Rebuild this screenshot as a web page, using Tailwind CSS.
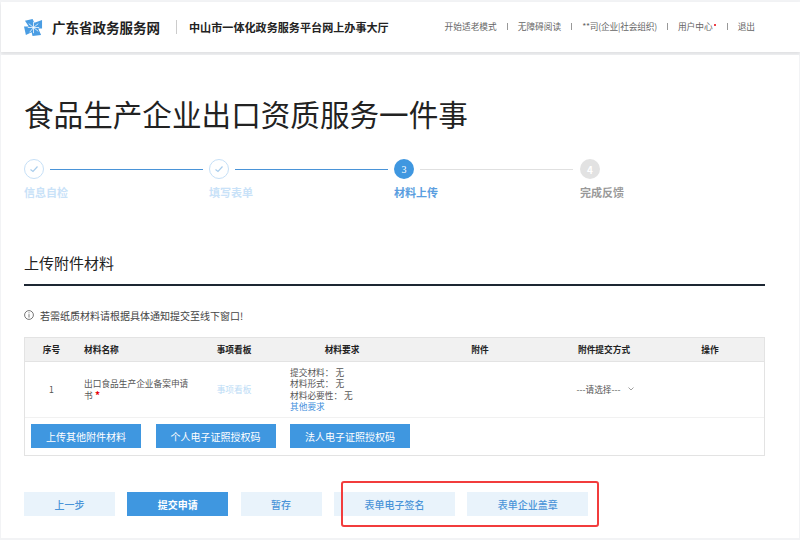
<!DOCTYPE html>
<html lang="zh-CN">

<head>
  <meta charset="UTF-8">
  <title>食品生产企业出口资质服务一件事</title>
  <script src="https://cdn.jsdelivr.net/npm/@tailwindcss/browser@4"></script>
</head>

<body class="relative w-[800px] h-[540px] overflow-hidden bg-[#f2f3f5] pt-[2px] font-['Noto_Sans_CJK_SC','Liberation_Sans',sans-serif] text-[#333]">
  <!-- top bar -->
  <header class="h-[50px] ml-[1px] bg-white flex items-center pl-[23px] pr-[45px] shadow-[0_2px_3px_rgba(0,0,0,0.08)]">
    <svg class="w-[19px] h-[19px] mr-[9px]" viewBox="0 0 20 20">
      <path d="M1 3 L9 1 L11 5 L19 2 L19 11 L15 11 L18 18 L9 19 L8 15 L2 18 L0 9 L5 9 Z" fill="#4a9de3" />
      <path d="M10 10 L5 6 M10 10 L15 6 M10 10 L6 15 M10 10 L15 14 M10 10 L10 4 M10 10 L16 10 M10 10 L4 10 M10 10 L10 16" stroke="#fff" stroke-width="0.8" />
    </svg>
    <span class="text-[13.5px] font-bold text-[#222]">广东省政务服务网</span>
    <span class="w-px h-[14px] bg-[#ccc] ml-[16px] mr-[12px]"></span>
    <span class="text-[11.1px] font-bold text-[#222]">中山市一体化政务服务平台网上办事大厅</span>
    <nav class="ml-auto flex items-center text-[8.7px] text-[#666]">
      <span>开始适老模式</span>
      <span class="w-px h-[7px] bg-[#999] mx-[10px]"></span>
      <span>无障碍阅读</span>
      <span class="w-px h-[7px] bg-[#999] mx-[10px]"></span>
      <span class="tracking-[-0.2px] whitespace-nowrap">**司(企业|社会组织)</span>
      <span class="w-px h-[7px] bg-[#999] mx-[10px]"></span>
      <span class="relative mr-[4px]">用户中心<i class="absolute -right-[3px] top-[4px] w-[2px] h-[2px] rounded-full bg-red-600"></i></span>
      <span class="w-px h-[7px] bg-[#999] mx-[10px]"></span>
      <span>退出</span>
    </nav>
  </header>

  <main class="mt-[3px] mx-[1px] h-[483px] bg-white pl-[23px] pr-[34px]">
    <h1 class="pt-[41px] h-[104px] text-[29.6px] leading-[36px] text-[#222]">食品生产企业出口资质服务一件事</h1>

    <!-- steps -->
    <div class="flex h-[44px]">
      <div class="w-[185px]">
        <div class="flex items-center">
          <span class="w-5 h-5 rounded-full border border-[#c6e0f7] flex items-center justify-center">
            <svg class="w-[10px] h-[10px]" viewBox="0 0 10 10" fill="none" stroke="#a9cdec" stroke-width="1.2"><path d="M1.5 5.5 L4 7.5 L8.5 2.5" /></svg>
          </span>
          <span class="w-[153px] h-px bg-[#4a94d8] ml-[6px]"></span>
        </div>
        <p class="mt-[5px] text-[11px] font-bold text-[#c9e2f8]">信息自检</p>
      </div>
      <div class="w-[185px]">
        <div class="flex items-center">
          <span class="w-5 h-5 rounded-full border border-[#c6e0f7] flex items-center justify-center">
            <svg class="w-[10px] h-[10px]" viewBox="0 0 10 10" fill="none" stroke="#a9cdec" stroke-width="1.2"><path d="M1.5 5.5 L4 7.5 L8.5 2.5" /></svg>
          </span>
          <span class="w-[153px] h-px bg-[#4a94d8] ml-[6px]"></span>
        </div>
        <p class="mt-[5px] text-[11px] font-bold text-[#c9e2f8]">填写表单</p>
      </div>
      <div class="w-[186px]">
        <div class="flex items-center">
          <span class="w-5 h-5 rounded-full bg-[#3f97e0] text-white text-[10px] flex items-center justify-center font-['Liberation_Serif',serif]">3</span>
          <span class="w-[153px] h-px bg-[#e0e0e0] ml-[6px]"></span>
        </div>
        <p class="mt-[5px] text-[11px] font-bold text-[#5a9ee0]">材料上传</p>
      </div>
      <div>
        <span class="w-5 h-5 rounded-full bg-[#e2e2e2] text-white text-[10px] font-bold flex items-center justify-center">4</span>
        <p class="mt-[5px] text-[11px] font-bold text-[#999]">完成反馈</p>
      </div>
    </div>

    <!-- section title -->
    <h2 class="mt-[44px] h-[39px] pt-[5px] border-b-2 border-[#1d2733] text-[15px] leading-[22px] text-[#222]">上传附件材料</h2>

    <div class="mt-[22px] h-[14px] flex items-center text-[10px] text-[#444]">
      <svg class="w-[10px] h-[10px] mr-[6px]" viewBox="0 0 10 10" fill="none" stroke="#555" stroke-width="0.8">
        <circle cx="5" cy="5" r="4.4" />
        <path d="M5 4.2 V7.6 M5 2.4 V3.3" />
      </svg>
      若需纸质材料请根据具体通知提交至线下窗口!
    </div>

    <!-- material table -->
    <section class="mt-[15px] h-[119px] border border-[#e3e3e3] text-[8.7px]">
      <div class="h-[24px] grid grid-cols-[53px_110px_92px_124px_152px_96px_1fr] items-center bg-[#f1f1f1] border-b border-[#e3e3e3] font-bold text-center text-[#222]">
        <span>序号</span>
        <span class="text-left pl-[6px]">材料名称</span>
        <span>事项看板</span>
        <span>材料要求</span>
        <span>附件</span>
        <span>附件提交方式</span>
        <span class="pl-[4px]">操作</span>
      </div>
      <div class="h-[56px] grid grid-cols-[53px_112px_88px_126px_154px_94px_1fr] items-center border-b border-[#f1f1f1] text-[#555]">
        <span class="text-center">1</span>
        <p class="pl-[6px] leading-[11.3px]">出口食品生产企业备案申请书<span class="text-red-600 font-bold text-[10px]"> *</span></p>
        <span class="text-center text-[#bcdcf6]">事项看板</span>
        <div class="pl-[12px] leading-[11.3px]">
          <p>提交材料： 无</p>
          <p>材料形式： 无</p>
          <p>材料必要性： 无</p>
          <p class="text-[#3f8fdc]">其他要求</p>
        </div>
        <span></span>
        <span class="flex items-center justify-center whitespace-nowrap">---请选择---
          <svg class="w-[6px] h-[4px] ml-[7px]" viewBox="0 0 6 4" fill="none" stroke="#888" stroke-width="0.8"><path d="M0.5 0.5 L3 3 L5.5 0.5" /></svg>
        </span>
        <span></span>
      </div>
      <div class="flex gap-[14.5px] pl-[6px] pt-[6px]">
        <button class="w-[110px] h-[24px] bg-[#3f97e0] text-white text-[10px]">上传其他附件材料</button>
        <button class="w-[120px] h-[24px] bg-[#3f97e0] text-white text-[10px]">个人电子证照授权码</button>
        <button class="w-[120px] h-[24px] bg-[#3f97e0] text-white text-[10px]">法人电子证照授权码</button>
      </div>
    </section>

    <!-- actions -->
    <div class="mt-[36px] flex gap-[12.3px] text-[10px] text-[#4a94d8] font-medium">
      <button class="w-[91px] h-[24px] bg-[#e9f3fb]">上一步</button>
      <button class="w-[101px] h-[24px] bg-[#3f97e0] text-white font-bold">提交申请</button>
      <button class="w-[81px] h-[24px] bg-[#e9f3fb]">暂存</button>
      <button class="w-[121px] h-[24px] bg-[#e9f3fb]">表单电子签名</button>
      <button class="w-[121px] h-[24px] bg-[#e9f3fb]">表单企业盖章</button>
    </div>
  </main>

  <!-- red annotation over the two form buttons -->
  <div class="absolute left-[341px] top-[481px] w-[258px] h-[46px] border-[2.5px] border-[#f23c3c] rounded-[3px]"></div>
</body>

</html>
